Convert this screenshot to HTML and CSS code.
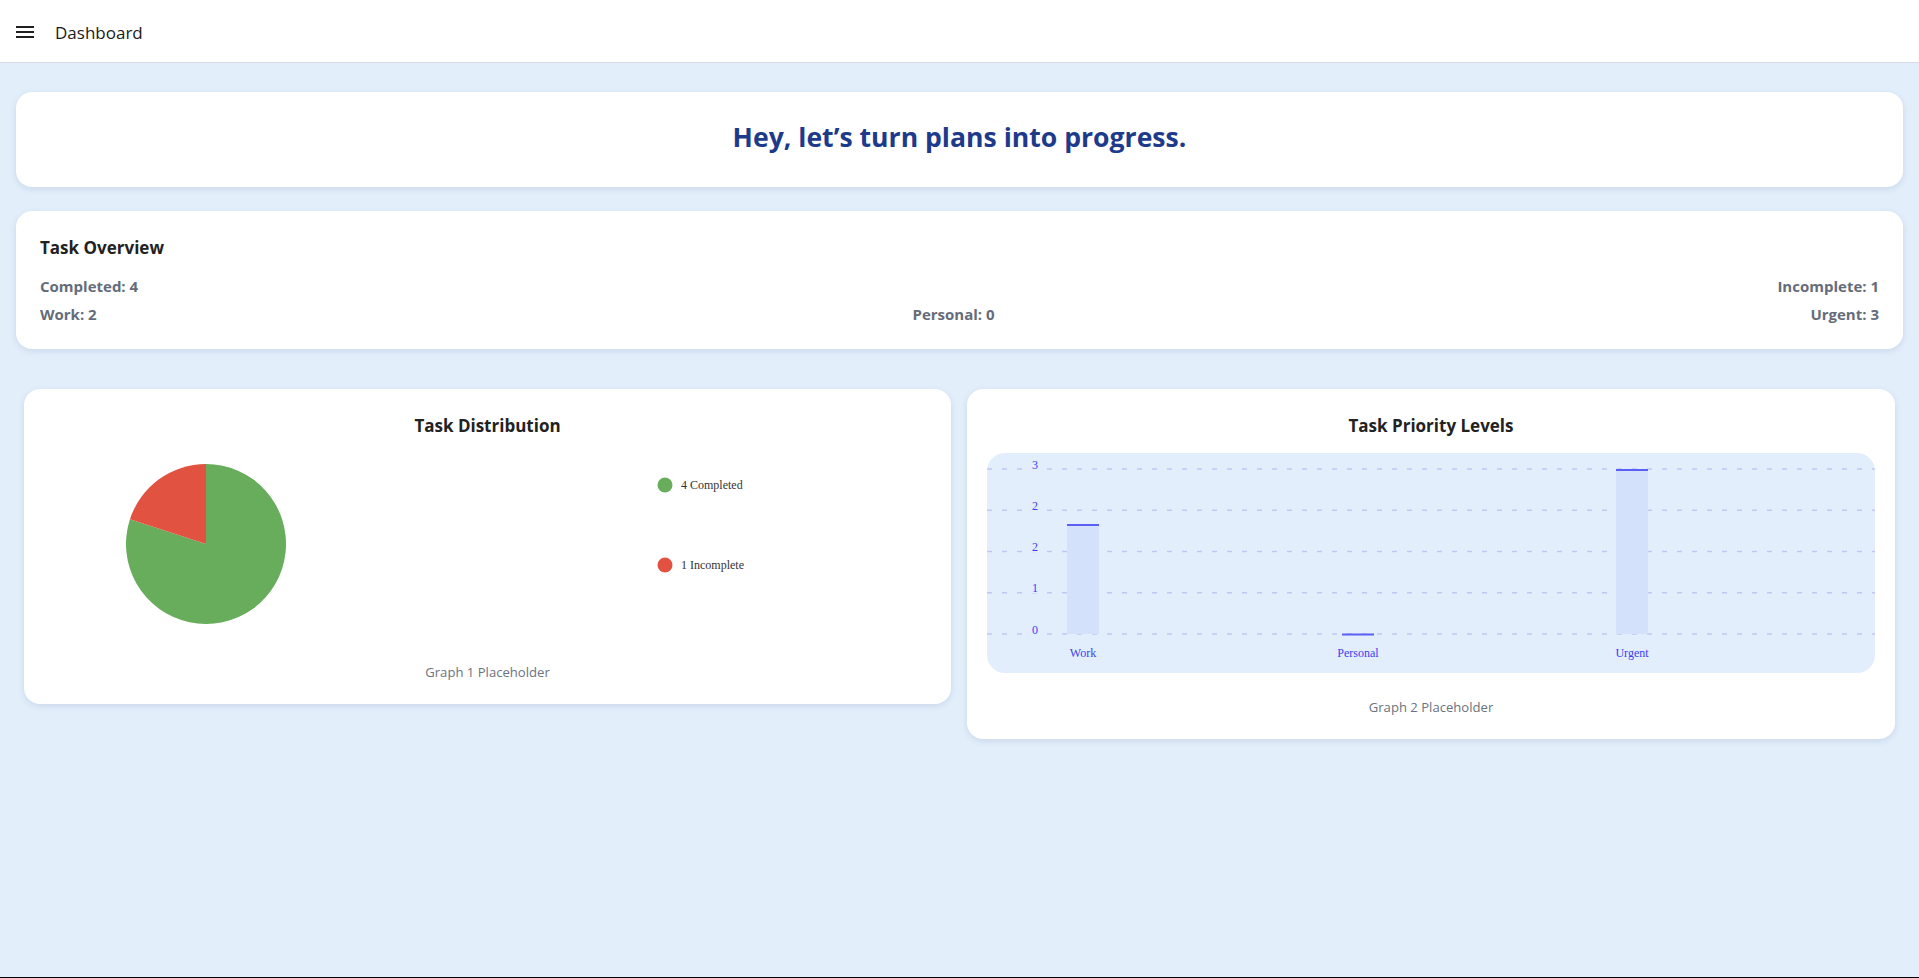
FILE: index.html
```html
<!DOCTYPE html>
<html lang="en">
<head>
<meta charset="utf-8">
<title>Dashboard</title>
<link rel="stylesheet" href="styles.css">
</head>
<body>
<header class="topbar">
  <svg class="menu-icon" viewBox="0 0 24 24" width="24" height="24" aria-hidden="true">
    <path d="M3 18h18v-2H3v2zm0-5h18v-2H3v2zm0-7v2h18V6H3z" fill="#1f1f1f"/>
  </svg>
  <span class="topbar-title">Dashboard</span>
</header>

<main class="page">
  <section class="card hero">
    <h1 class="hero-text">Hey, let’s turn plans into progress.</h1>
  </section>

  <section class="card overview">
    <h2 class="overview-title">Task Overview</h2>
    <div class="stat-row">
      <span class="stat">Completed: 4</span>
      <span class="stat">Incomplete: 1</span>
    </div>
    <div class="stat-row">
      <span class="stat">Work: 2</span>
      <span class="stat">Personal: 0</span>
      <span class="stat">Urgent: 3</span>
    </div>
  </section>

  <section class="charts">
    <div class="card chart-card">
      <h3 class="chart-title">Task Distribution</h3>
      <div class="chart-box pie-box">
        <svg class="chart-svg" width="887" height="185" viewBox="0 0 887 185">
          <path d="M162 91 L162 11 A80 80 0 1 1 85.92 66.28 Z" fill="#67ad5b"/>
          <path d="M162 91 L162 11 A80 80 0 0 0 85.92 66.28 Z" fill="#e15241"/>
          <circle cx="621" cy="32" r="7.5" fill="#67ad5b"/>
          <text class="legend-text" x="637" y="36">4 Completed</text>
          <circle cx="621" cy="112" r="7.5" fill="#e15241"/>
          <text class="legend-text" x="637" y="116">1 Incomplete</text>
        </svg>
      </div>
      <p class="placeholder">Graph 1 Placeholder</p>
    </div>

    <div class="card chart-card">
      <h3 class="chart-title">Task Priority Levels</h3>
      <div class="chart-box bar-box">
        <svg class="chart-svg" width="888" height="220" viewBox="0 0 888 220">
          <g class="grid">
            <line x1="0" y1="16" x2="888" y2="16"/>
            <line x1="0" y1="57.25" x2="888" y2="57.25"/>
            <line x1="0" y1="98.5" x2="888" y2="98.5"/>
            <line x1="0" y1="139.75" x2="888" y2="139.75"/>
            <line x1="0" y1="181" x2="888" y2="181"/>
          </g>
          <g class="y-labels">
            <rect x="43" y="6" width="12" height="11" fill="#e3eefc"/>
            <rect x="43" y="47" width="12" height="11" fill="#e3eefc"/>
            <rect x="43" y="88" width="12" height="11" fill="#e3eefc"/>
            <rect x="43" y="129" width="12" height="11" fill="#e3eefc"/>
            <rect x="43" y="171" width="12" height="11" fill="#e3eefc"/>
            <text class="axis-text" x="48" y="16">3</text>
            <text class="axis-text" x="48" y="57">2</text>
            <text class="axis-text" x="48" y="98">2</text>
            <text class="axis-text" x="48" y="139">1</text>
            <text class="axis-text" x="48" y="181">0</text>
          </g>
          <rect x="80" y="71" width="32" height="110" fill="#d4e1fa"/>
          <rect x="80" y="71" width="32" height="2" fill="#5b5ff5"/>
          <rect x="355" y="180.5" width="32" height="2" fill="#5b5ff5"/>
          <rect x="629" y="16" width="32" height="165" fill="#d4e1fa"/>
          <rect x="629" y="16" width="32" height="2" fill="#5b5ff5"/>
          <text class="axis-text" x="96" y="204">Work</text>
          <text class="axis-text" x="371" y="204">Personal</text>
          <text class="axis-text" x="645" y="204">Urgent</text>
        </svg>
      </div>
      <p class="placeholder">Graph 2 Placeholder</p>
    </div>
  </section>
</main>
</body>
</html>
```

FILE: styles.css
```css
* {
  box-sizing: border-box;
}

html, body {
  margin: 0;
  padding: 0;
}

body {
  background: #e2eefa;
  font-family: "Open Sans", "Noto Sans", "Liberation Sans", sans-serif;
  color: #1f1f1f;
  min-height: 100vh;
  border-bottom: 1px solid #000;
}

.topbar {
  height: 63px;
  background: #ffffff;
  border-bottom: 1px solid #d9dde3;
  display: flex;
  align-items: center;
  padding-left: 13px;
  gap: 18px;
}

.menu-icon {
  display: block;
  margin-top: 1px;
}

.topbar-title {
  font-size: 17px;
  font-weight: 500;
  color: #1a1a1a;
  line-height: 1;
  padding-top: 3px;
}

.page {
  padding: 29px 16px 40px;
  display: flex;
  flex-direction: column;
}

.card {
  background: #ffffff;
  border-radius: 16px;
  box-shadow: 0 2px 6px rgba(40, 70, 120, 0.13);
}

.hero {
  padding: 27px 24px 31px;
  text-align: center;
}

.hero-text {
  margin: 0;
  font-size: 26.6px;
  line-height: 37px;
  font-weight: 700;
  color: #1e3a8a;
  letter-spacing: 0;
}

.overview {
  margin-top: 24px;
  padding: 24px 24px 24px;
}

.overview-title {
  margin: 0 0 15px;
  font-size: 17px;
  line-height: 26px;
  font-weight: 700;
  color: #222;
}

.stat-row {
  display: flex;
  justify-content: space-between;
}

.stat-row + .stat-row {
  margin-top: 7px;
}

.stat {
  font-size: 15px;
  line-height: 21px;
  font-weight: 700;
  color: #656c79;
}

.charts {
  margin: 40px 8px 0;
  display: grid;
  grid-template-columns: 1fr 1fr;
  gap: 16px;
  align-items: start;
}

.chart-card {
  padding: 24px 20px 22px;
  display: flex;
  flex-direction: column;
  align-items: center;
}

.chart-title {
  margin: 0 0 14px;
  font-size: 17px;
  line-height: 26px;
  font-weight: 700;
  color: #222;
}

.chart-box {
  width: 100%;
  overflow: hidden;
}

.pie-box {
  height: 185px;
}

.bar-box {
  height: 220px;
  background: #e3eefc;
  border-radius: 18px;
}

.chart-svg {
  display: block;
}

.legend-text {
  font-family: "Liberation Serif", "Times New Roman", serif;
  font-size: 12px;
  fill: #333;
}

.grid line {
  stroke: #bfc7f4;
  stroke-width: 1.5;
  stroke-dasharray: 5 10;
}

.axis-text {
  font-family: "Liberation Serif", "Times New Roman", serif;
  font-size: 12px;
  fill: #3d3df5;
  text-anchor: middle;
}

.placeholder {
  margin: 24px 0 0;
  font-size: 13.1px;
  line-height: 20px;
  color: #6b7280;
}
```
